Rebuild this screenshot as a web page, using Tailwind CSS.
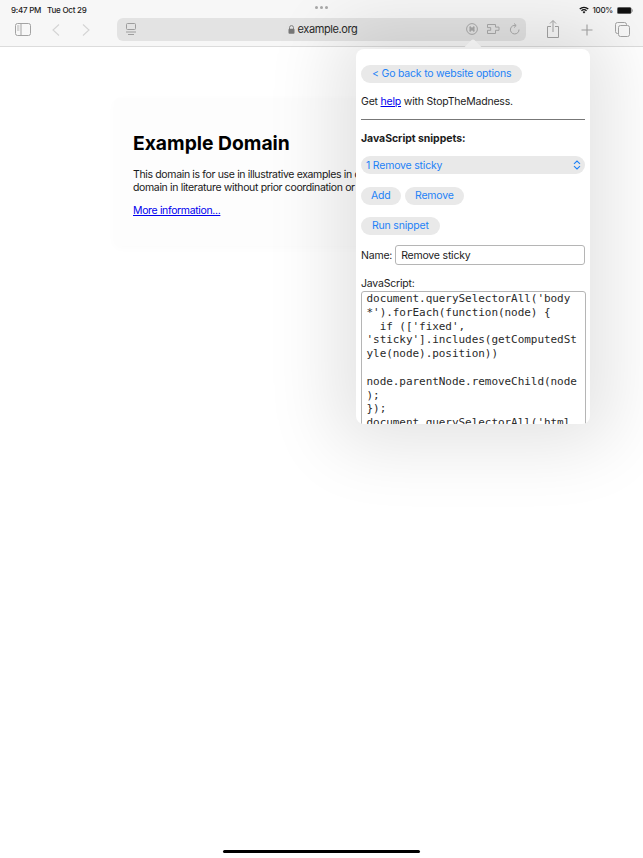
<!DOCTYPE html>
<html lang="en">
<head>
<meta charset="utf-8">
<title>StopTheMadness</title>
<script src="https://cdn.jsdelivr.net/npm/@tailwindcss/browser@4"></script>
</head>
<body class="m-0 bg-white">
<div class="relative w-[643px] h-[858px] overflow-hidden bg-white font-['Inter','Liberation_Sans',sans-serif] text-black">
  <header class="relative h-[47px] bg-[#f7f7f7] border-b border-[#dcdcdc] flex flex-col">
    <div class="absolute left-[315px] top-[6px] flex gap-[2px]">
      <span class="w-[3px] h-[3px] rounded-full bg-[#a8a8a8]"></span>
      <span class="w-[3px] h-[3px] rounded-full bg-[#a8a8a8]"></span>
      <span class="w-[3px] h-[3px] rounded-full bg-[#a8a8a8]"></span>
    </div>
    <div class="h-[18px] flex items-center justify-between pl-[11px] pr-[10px] text-[8px] tracking-[-0.25px] leading-none font-medium text-[#222]">
      <div class="flex gap-[6px] pt-[2px]"><span>9:47 PM</span><span>Tue Oct 29</span></div>
      <div class="flex items-center gap-[3px] pt-[2px]">
        <svg width="10" height="8" viewBox="0 0 10 8"><path d="M0.3 2.6a6.6 6.6 0 0 1 9.4 0l-.9 1a5.3 5.3 0 0 0-7.6 0zM2 4.3a4.2 4.2 0 0 1 6 0l-.9 1a3 3 0 0 0-4.2 0zM3.6 6a2 2 0 0 1 2.8 0L5 7.6z" fill="#111"/></svg>
        <span>100%</span>
        <svg width="16" height="7" viewBox="0 0 16 7" class="ml-[1px]"><rect x=".25" y=".25" width="14" height="6.500" rx="1.500" fill="#111" stroke="#888" stroke-width=".5"/><rect x="14.800" y="2.300" width="1" height="2.400" rx=".5" fill="#999"/></svg>
      </div>
    </div>
    <div class="flex-1 flex items-start pl-[15px] pr-[14px]">
      <div class="flex items-center gap-[14px] h-[23px] w-[102px] shrink-0">
        <svg width="16" height="13" viewBox="0 0 16 13" fill="none" stroke="#a3a3a3" stroke-width="1"><rect x=".5" y=".5" width="15" height="12" rx="2"/><path d="M6 .5v12"/><path d="M2 3h2.400M2 5h2.400M2 7h2.400" stroke-width=".8"/></svg>
        <svg width="8" height="12" viewBox="0 0 8 12" fill="none" stroke="#d4d4d4" stroke-width="1.100" class="ml-[7px]"><path d="M7 .5 1 6l6 5.500"/></svg>
        <svg width="8" height="12" viewBox="0 0 8 12" fill="none" stroke="#d4d4d4" stroke-width="1.100" class="ml-[8px]"><path d="M1 .5 7 6l-6 5.500"/></svg>
      </div>
      <div class="relative w-[409px] h-[23px] shrink-0 rounded-[6px] bg-[#e3e3e3] flex items-center justify-center">
        <svg width="12" height="13" viewBox="0 0 12 13" fill="none" stroke="#9d9d9d" class="absolute left-[8px] top-[5px]"><rect x="1.500" y=".5" width="9" height="6" rx="1"/><path d="M1 9h10M3 11.500h6" /></svg>
        <div class="flex items-center gap-[3px] text-[11px] tracking-[-0.4px] leading-none text-[#2a2a2a] pl-[2px]">
          <svg width="7" height="9" viewBox="0 0 7 9"><path d="M1.500 4V2.600a2 2 0 0 1 4 0V4" fill="none" stroke="#777" stroke-width=".9"/><rect x=".5" y="3.800" width="6" height="5" rx="1" fill="#777"/></svg>
          <span>example.org</span>
        </div>
        <div class="absolute right-[6px] top-[5px] flex items-center gap-[9px]">
          <svg width="12" height="12" viewBox="0 0 12 12" fill="none" stroke="#a9a9a9"><circle cx="6" cy="6" r="5.400"/><path d="M3.600 3.600 8.400 8.400M8.400 3.600 3.600 8.400M3.300 6h5.400" stroke-width="1.500"/></svg>
          <svg width="13" height="12" viewBox="0 0 13 12" fill="none" stroke="#a9a9a9"><path d="M.5 1.500h8v2.600h3.500v3.200H8.500v3.200h-8V7.300h3.200V4.600H.5z"/></svg>
          <svg width="11" height="12" viewBox="0 0 11 12" fill="none" stroke="#a9a9a9"><path d="M6.800 2.500A4.300 4.300 0 1 0 10 6.500"/><path d="M5 .4 7.200 2.500 5 4.600"/></svg>
        </div>
      </div>
      <div class="flex-1 flex items-center h-[23px] pl-[21px]">
        <svg width="12" height="18" viewBox="0 0 12 18" fill="none" stroke="#a3a3a3" class="mb-[2px]"><path d="M4 6.500H.5v11h11v-11H8M6 12V.8M3 3.500l3-3 3 3"/></svg>
        <svg width="12" height="12" viewBox="0 0 12 12" fill="none" stroke="#a3a3a3" stroke-width="1.100" class="ml-[22px]"><path d="M6 .5v11M.5 6h11"/></svg>
        <svg width="15" height="15" viewBox="0 0 15 15" fill="none" stroke="#a3a3a3" class="ml-[22px]"><rect x="3.500" y="3.500" width="11" height="11" rx="2"/><path d="M3 11.500H2.500a2 2 0 0 1-2-2V2.500a2 2 0 0 1 2-2h7a2 2 0 0 1 2 2V3"/></svg>
      </div>
    </div>
  </header>

  <main class="absolute left-[114px] top-[98px] w-[400px] h-[148px] rounded-[6px] bg-[#fdfdfd] shadow-[0_2px_8px_rgba(0,0,0,0.02)] pl-[19px] pt-[33px]">
    <h1 class="text-[19.300px] leading-[24px] font-bold m-0">Example Domain</h1>
    <p class="whitespace-nowrap text-[10.500px] tracking-[-0.35px] leading-[13px] text-[#1a1a1a] mt-[13px]">This domain is for use in illustrative examples in documents.<br>domain in literature without prior coordination or asking.</p>
    <a href="#" class="block mt-[10px] text-[10.500px] tracking-[-0.35px] leading-[13px] text-[#0000ee] underline">More information...</a>
  </main>

  <div class="absolute left-[465px] top-[42px] w-[16px] h-[16px] rotate-45 rounded-[2px] bg-white z-10"></div>
  <aside class="absolute left-[356px] top-[49px] w-[234px] h-[375px] overflow-hidden rounded-[8px] bg-white shadow-[0_0_70px_22px_rgba(0,0,0,0.11)] z-10 px-[5px] pt-[16px] text-[10.500px] tracking-[-0.2px] leading-[13px] text-[#1c1c1c]">
    <button class="block h-[18px] px-[11px] rounded-full bg-[#e9e9e9] leading-[18px] text-[#1e82f7]">&lt; Go back to website options</button>
    <p class="mt-[12px] leading-[13px]">Get <a href="#" class="text-[#0000ee] underline">help</a> with StopTheMadness.</p>
    <hr class="mt-[11px] border-0 h-[1px] bg-[#777] w-[224px]">
    <h2 class="mt-[12px] leading-[13px] font-bold tracking-[-0.05px]">JavaScript snippets:</h2>
    <div class="mt-[11px] w-[224px] h-[18px] rounded-full bg-[#e9e9e9] flex items-center justify-between pl-[5px] pr-[4px] text-[#1e82f7]">
      <span>1 Remove sticky</span>
      <svg width="8" height="10" viewBox="0 0 8 10" fill="none" stroke="#1e82f7" stroke-width="1.100"><path d="M1 3.800 4 1l3 2.800M1 6.200 4 9l3-2.800"/></svg>
    </div>
    <div class="mt-[13px] flex gap-[4px]">
      <button class="h-[18px] px-[10px] rounded-full bg-[#e9e9e9] text-[#1e82f7] leading-[18px]">Add</button>
      <button class="h-[18px] px-[10.500px] rounded-full bg-[#e9e9e9] text-[#1e82f7] leading-[18px]">Remove</button>
    </div>
    <button class="block mt-[12px] h-[18px] px-[11px] rounded-full bg-[#e9e9e9] text-[#1e82f7] leading-[18px]">Run snippet</button>
    <div class="mt-[10px] flex items-center gap-[3px]">
      <span>Name:</span>
      <input value="Remove sticky" class="w-[192px] h-[20px] rounded-[3px] border border-[#b5b5b5] bg-white px-[5px] tracking-[-0.2px] text-[#1c1c1c] outline-none">
    </div>
    <div class="mt-[13px] leading-[12px]">JavaScript:</div>
    <div class="mt-[1px] w-[225px] h-[200px] rounded-[3px] border border-[#b5b5b5] pl-[4.500px] font-['DejaVu_Sans_Mono','Liberation_Mono',monospace] text-[11px] tracking-[-0.05px] leading-[13.800px] text-[#2a2a2a] whitespace-pre">document.querySelectorAll('body
*').forEach(function(node) {
  if (['fixed',
'sticky'].includes(getComputedSt
yle(node).position))

node.parentNode.removeChild(node
);
});
document.querySelectorAll('html</div>
  </aside>

  <div class="absolute left-[223px] top-[850px] w-[197px] h-[3px] rounded-full bg-black"></div>
</div>
</body>
</html>
